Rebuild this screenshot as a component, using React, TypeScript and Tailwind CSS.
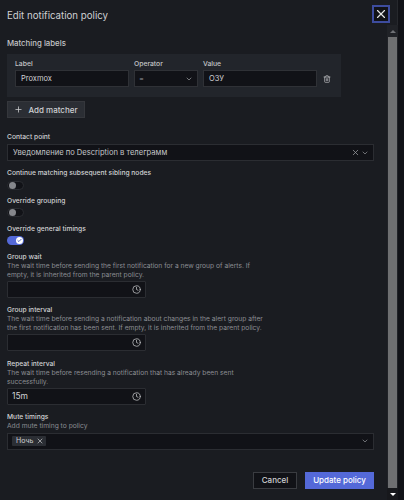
import { ChevronDown, Plus, Trash2, X, Check, Clock } from "lucide-react";

function FieldLabel({ children }: { children: React.ReactNode }) {
  return <div className="text-[6.7px] leading-[9px] font-medium text-[#d0d1d3]">{children}</div>;
}

function Description({ children }: { children: React.ReactNode }) {
  return <p className="text-[6.7px] leading-[8.5px] text-[#8b8d93] w-[265px]">{children}</p>;
}

function Switch({ on }: { on?: boolean }) {
  if (on) {
    return (
      <div className="w-[17px] h-[9px] rounded-full bg-[#5469d8] flex items-center justify-end pr-[1px]">
        <div className="w-[7px] h-[7px] rounded-full bg-white flex items-center justify-center">
          <Check className="w-[5px] h-[5px] text-[#3d51b8]" strokeWidth={4} />
        </div>
      </div>
    );
  }
  return (
    <div className="w-[17px] h-[9px] rounded-full bg-[#111217] border border-[#2a2c31] flex items-center pl-[0.5px]">
      <div className="w-[7px] h-[7px] rounded-full bg-[#85878c]" />
    </div>
  );
}

function TimingInput({ value }: { value?: string }) {
  return (
    <div className="w-[139px] h-[17px] mt-[2px] bg-[#111217] border border-[#2b2d32] rounded-[1px] flex items-center justify-between pl-[4px] pr-[4px] text-[8.5px] text-[#d0d1d3]">
      <span>{value}</span>
      <Clock className="w-[9px] h-[9px] text-[#c4c5c8]" strokeWidth={2} />
    </div>
  );
}

export default function App() {
  return (
    <div className="w-[404px] h-[500px] flex overflow-hidden bg-[#111217] font-['Inter',sans-serif] antialiased">
      <div className="w-[398px] h-full bg-[#1a1c21] flex flex-col border-r border-[#26282d]">
        {/* Header */}
        <div className="h-[25px] pl-[7px] pr-[7px] flex items-start justify-between shrink-0">
          <h1 className="text-[9.7px] leading-[12px] mt-[10px] text-[#cfd0d2]">Edit notification policy</h1>
          <button className="w-[18px] h-[18px] mt-[5px] bg-[#111217] border-2 border-[#3d4c9e] flex items-center justify-center">
            <X className="w-[14px] h-[14px] shrink-0 text-[#e4e5e6]" strokeWidth={2} />
          </button>
        </div>

        <div className="flex flex-1 min-h-0">
          {/* Form */}
          <div className="flex-1 pl-[7px] pr-[13px] pt-[14px]">
            <div className="text-[7.8px] leading-[9px] font-medium text-[#c4c5c8]">Matching labels</div>

            <div className="w-[334px] h-[43px] mt-[6px] bg-[#22252b] px-[8px] pt-[6px] flex gap-[5px]">
              <div>
                <div className="text-[6.8px] leading-[8px] font-medium text-[#c4c5c8]">Label</div>
                <div className="w-[114px] h-[17px] mt-[2px] bg-[#111217] border border-[#2f3136] flex items-center px-[5px] text-[7.5px] text-[#d0d1d3]">Proxmox</div>
              </div>
              <div>
                <div className="text-[6.8px] leading-[8px] font-medium text-[#c4c5c8]">Operator</div>
                <div className="w-[64px] h-[17px] mt-[2px] bg-[#111217] border border-[#2f3136] flex items-center justify-between px-[4px] text-[7.5px] text-[#9a9ca0]">
                  <span>=</span>
                  <ChevronDown className="w-[8px] h-[8px] text-[#a8a9ac]" />
                </div>
              </div>
              <div>
                <div className="text-[6.8px] leading-[8px] font-medium text-[#c4c5c8]">Value</div>
                <div className="w-[114px] h-[17px] mt-[2px] bg-[#111217] border border-[#2f3136] flex items-center px-[5px] text-[7.5px] text-[#d0d1d3]">ОЗУ</div>
              </div>
              <Trash2 className="w-[8px] h-[8px] mt-[15px] ml-[1px] text-[#c4c5c8]" strokeWidth={2} />
            </div>

            <button className="w-[78px] h-[17px] mt-[4px] bg-[#2b2e34] border border-[#35373c] flex items-center justify-center gap-[5px] text-[8px] font-medium text-[#d0d1d3]">
              <Plus className="w-[9px] h-[9px]" strokeWidth={2} />
              Add matcher
            </button>

            <div className="mt-[15px]">
              <FieldLabel>Contact point</FieldLabel>
            </div>
            <div className="w-[367px] h-[17px] mt-[2px] bg-[#111217] border border-[#2b2d32] flex items-center justify-between pl-[5px] pr-[4px] text-[7.6px] text-[#c4c5c8]">
              <span>Уведомление по Description в телеграмм</span>
              <div className="flex items-center gap-[1px] text-[#9a9ca0]">
                <X className="w-[9px] h-[9px]" strokeWidth={2} />
                <ChevronDown className="w-[8px] h-[8px]" />
              </div>
            </div>

            <div className="mt-[8px]"><FieldLabel>Continue matching subsequent sibling nodes</FieldLabel></div>
            <div className="mt-[3px]"><Switch /></div>

            <div className="mt-[6.5px]"><FieldLabel>Override grouping</FieldLabel></div>
            <div className="mt-[2.5px]"><Switch /></div>

            <div className="mt-[7.5px]"><FieldLabel>Override general timings</FieldLabel></div>
            <div className="mt-[2.5px]"><Switch on /></div>

            <div className="mt-[8px]"><FieldLabel>Group wait</FieldLabel></div>
            <Description>The wait time before sending the first notification for a new group of alerts. If empty, it is inherited from the parent policy.</Description>
            <TimingInput />

            <div className="mt-[8px]"><FieldLabel>Group interval</FieldLabel></div>
            <Description>The wait time before sending a notification about changes in the alert group after the first notification has been sent. If empty, it is inherited from the parent policy.</Description>
            <TimingInput />

            <div className="mt-[9px]"><FieldLabel>Repeat interval</FieldLabel></div>
            <Description>The wait time before resending a notification that has already been sent successfully.</Description>
            <TimingInput value="15m" />

            <div className="mt-[7.5px]"><FieldLabel>Mute timings</FieldLabel></div>
            <Description>Add mute timing to policy</Description>
            <div className="w-[367px] h-[17px] mt-[2.5px] bg-[#111217] border border-[#2b2d32] flex items-center justify-between pl-[4px] pr-[4px] text-[#9a9ca0]">
              <div className="h-[10px] pl-[4px] pr-[2px] bg-[#2b2e34] rounded-[1px] flex items-center gap-[3px] text-[7px] text-[#d0d1d3]">
                Ночь
                <X className="w-[8px] h-[8px]" strokeWidth={2} />
              </div>
              <ChevronDown className="w-[8px] h-[8px]" />
            </div>

            <div className="w-[367px] mt-[22px] flex justify-end gap-[8px]">
              <button className="w-[44px] h-[17px] bg-[#111217] border border-[#3a3c41] text-[8px] font-medium text-[#d0d1d3]">Cancel</button>
              <button className="w-[69px] h-[17px] bg-[#5469d8] text-[8px] font-medium text-white">Update policy</button>
            </div>
          </div>

          {/* Scrollbar */}
          <div className="w-[11px] shrink-0 bg-[#202227] flex flex-col items-center">
            <div className="h-[12px] flex items-center justify-center">
              <div className="w-0 h-0 border-x-[3px] border-x-transparent border-b-[3px] border-b-[#6f7176]" />
            </div>
            <div className="w-[9px] flex-1 bg-[#6e6f71]" />
            <div className="h-[12px] w-full bg-[#17181c] flex items-center justify-center">
              <div className="w-0 h-0 border-x-[3px] border-x-transparent border-t-[3px] border-t-white" />
            </div>
          </div>
        </div>
      </div>
    </div>
  );
}
